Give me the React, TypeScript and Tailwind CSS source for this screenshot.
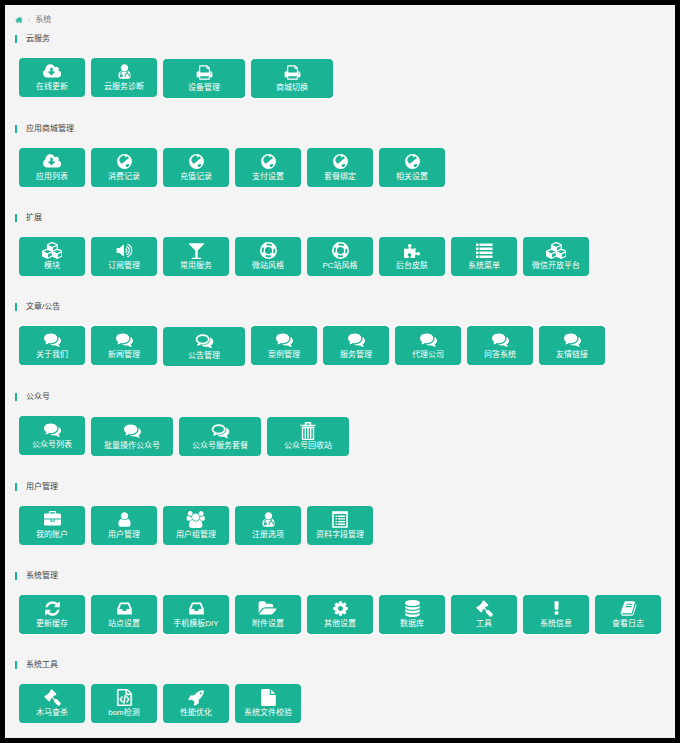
import { ReactNode } from "react";
import { FaPuzzlePiece } from "react-icons/fa";

type IconProps = {
  path: string;
  viewBox?: string;
  className?: string;
};

type CardType = {
  label: string;
  icon: ReactNode;
  wide?: boolean;
};

type SectionType = {
  title: string;
  cards: CardType[];
};

const Icon: React.FC<IconProps> = ({
  path,
  viewBox = "0 0 1792 1792",
  className = "h-[17px]",
}) => (
  <svg className={className} viewBox={viewBox} fill="currentColor" aria-hidden="true">
    <path d={path} />
  </svg>
);

const paths = {
  home: "M1472 992v480q0 26-19 45t-45 19h-384v-384h-256v384h-384q-26 0-45-19t-19-45v-480q0-1 .5-3t.5-3l575-474 575 474q1 2 1 6zm223-69l-62 74q-8 9-21 11h-3q-13 0-21-7l-692-577-692 577q-12 8-24 7-13-2-21-11l-62-74q-8-10-7-23.5t11-21.5l719-599q32-26 76-26t76 26l244 204v-195q0-14 9-23t23-9h192q14 0 23 9t9 23v408l219 182q10 8 11 21.5t-7 23.5z",
  cloud:
    "M1216 928q0-14-9-23t-23-9h-224v-352q0-13-9.5-22.5t-22.5-9.5h-192q-13 0-22.5 9.5t-9.5 22.5v352h-224q-13 0-22.5 9.5t-9.5 22.5q0 14 9 23l352 352q9 9 23 9t23-9l351-351q10-12 10-24zm640 224q0 159-112.5 271.5t-271.5 112.5h-1088q-185 0-316.5-131.5t-131.5-316.5q0-130 70-240t188-165q-2-30-2-43 0-212 150-362t362-150q156 0 285.5 87t188.5 231q71-62 166-62 106 0 181 75t75 181q0 76-41 138 130 31 213.5 135.5t83.5 238.5z",
  user: "M1536 1399q0 109-62.5 187t-150.5 78h-854q-88 0-150.5-78t-62.5-187q0-85 8.5-160.5t31.5-152 58.5-131 94-89 134.5-34.5q131 128 313 128t313-128q76 0 134.5 34.5t94 89 58.5 131 31.5 152 8.5 160.5zm-256-887q0 159-112.5 271.5t-271.5 112.5-271.5-112.5-112.5-271.5 112.5-271.5 271.5-112.5 271.5 112.5 112.5 271.5z",
  print:
    "M448 1536h896v-256h-896v256zm0-640h896v-384h-160q-40 0-68-28t-28-68v-160h-640v640zm1152 64q0-26-19-45t-45-19-45 19-19 45 19 45 45 19 45-19 19-45zm128 0v416q0 13-9.5 22.5t-22.5 9.5h-224v160q0 40-28 68t-68 28h-960q-40 0-68-28t-28-68v-160h-224q-13 0-22.5-9.5t-9.5-22.5v-416q0-79 56.5-135.5t135.5-56.5h64v-544q0-40 28-68t68-28h672q40 0 88 20t76 48l152 152q28 28 48 76t20 88v256h64q79 0 135.5 56.5t56.5 135.5z",
  cubes:
    "M640 1632l384-192v-314l-384 164v342zm-64-454l404-173-404-173-404 173zm1088 454l384-192v-314l-384 164v342zm-64-454l404-173-404-173-404 173zm-448-293l384-165v-266l-384 164v267zm-64-379l441-189-441-189-441 189zm1088 518v416q0 36-19 67t-52 47l-448 224q-25 14-57 14t-57-14l-448-224q-4-2-7-4-2 2-7 4l-448 224q-25 14-57 14t-57-14l-448-224q-33-16-52-47t-19-67v-416q0-38 21.5-70t56.5-48l434-186v-400q0-38 21.5-70t56.5-48l448-192q23-10 50-10t50 10l448 192q35 16 56.5 48t21.5 70v400l434 186q36 16 57 48t21 70z",
  volume:
    "M832 352v1088q0 26-19 45t-45 19-45-19l-333-333h-262q-26 0-45-19t-19-45v-384q0-26 19-45t45-19h262l333-333q19-19 45-19t45 19 19 45zm384 544q0 76-42.5 141.5t-112.5 93.5q-10 5-25 5-26 0-45-18.5t-19-45.5q0-21 12-35.5t29-25 34-23 29-36 12-56.5-12-56.5-29-36-34-23-29-25-12-35.5q0-27 19-45.5t45-18.5q15 0 25 5 70 27 112.5 93t42.5 142zm256 0q0 153-85 282.5t-225 188.5q-13 5-25 5-27 0-46-19t-19-45q0-39 39-59 56-29 76-44 74-54 115.5-135.5t41.5-173.5-41.5-173.5-115.5-135.5q-20-15-76-44-39-20-39-59 0-26 19-45t45-19q13 0 26 5 140 59 225 188.5t85 282.5zm256 0q0 230-127 422.5t-338 283.5q-13 5-26 5-26 0-45-19t-19-45q0-36 39-59 7-4 22.5-10.5t22.5-10.5q46-25 82-51 123-91 192-227t69-289-69-289-192-227q-36-26-82-51-7-4-22.5-10.5t-22.5-10.5q-39-23-39-59 0-26 19-45t45-19q13 0 26 5 211 91 338 283.5t127 422.5z",
  glass:
    "M1699 186q0 35-43 78l-632 632v768h320q26 0 45 19t19 45-19 45-45 19h-896q-26 0-45-19t-19-45 19-45 45-19h320v-768l-632-632q-43-43-43-78 0-23 18-36.5t38-17.5 43-4h1408q23 0 43 4t38 17.5 18 36.5z",
  comments:
    "M1408 768q0 139-94 257t-256.5 186.5-353.5 68.5q-86 0-176-16-124 88-278 128-36 9-86 16h-3q-11 0-20.5-8t-11.5-21q-1-3-1-6.5t.5-6.5 2-6l2.5-5 3.5-5.5 4-5 4.5-5 4-4.5q5-6 23-25t26-29.5 22.5-29 25-38.5 20.5-44q-124-72-195-177t-71-224q0-139 94-257t256.5-186.5 353.5-68.5 353.5 68.5 256.5 186.5 94 257zm384 256q0 120-71 224.5t-195 176.5q10 24 20.5 44t25 38.5 22.5 29 26 29.5 23 25q1 1 4 4.5t4.5 5 4 5 3.5 5.5l2.5 5 2 6 .5 6.5-1 6.5q-3 14-13 22t-22 7q-50-7-86-16-154-40-278-128-90 16-176 16-271 0-472-132 58 4 88 4 161 0 309-45t264-129q125-92 192-212t67-254q0-77-23-152 129 71 204 178t75 230z",
  commentsOutline:
    "M704 384q-153 0-286 52t-211.5 141-78.5 191q0 82 53 158t149 132l97 56-35 84q34-20 62-39l44-31 53 10q78 14 153 14 153 0 286-52t211.5-141 78.5-191-78.5-191-211.5-141-286-52zm0-128q191 0 353.5 68.5t256.5 186.5 94 257-94 257-256.5 186.5-353.5 68.5q-86 0-176-16-124 88-278 128-36 9-86 16h-3q-11 0-20.5-8t-11.5-21q-1-3-1-6.5t.5-6.5 2-6l2.5-5 3.5-5.5 4-5 4.5-5 4-4.5q5-6 23-25t26-29.5 22.5-29 25-38.5 20.5-44q-124-72-195-177t-71-224q0-139 94-257t256.5-186.5 353.5-68.5zm822 1169q10 24 20.5 44t25 38.5 22.5 29 26 29.5 23 25q1 1 4 4.5t4.5 5 4 5 3.5 5.5l2.5 5 2 6 .5 6.5-1 6.5q-3 14-13 22t-22 7q-50-7-86-16-154-40-278-128-90 16-176 16-271 0-472-132 58 4 88 4 161 0 309-45t264-129q125-92 192-212t67-254q0-77-23-152 129 71 204 178t75 230q0 120-71 224.5t-195 176.5z",
  briefcase:
    "M640 256h512v-128h-512v128zm1152 640v480q0 66-47 113t-113 47h-1472q-66 0-113-47t-47-113v-480h672v160q0 26 19 45t45 19h320q26 0 45-19t19-45v-160h672zm-768 0v128h-256v-128h256zm768-480v384h-1792v-384q0-66 47-113t113-47h352v-160q0-40 28-68t68-28h576q40 0 68 28t28 68v160h352q66 0 113 47t47 113z",
  users:
    "M657 896q-162 5-265 128h-134q-82 0-138-40.5t-56-118.5q0-353 124-353 6 0 43.5 21t97.5 42.5 119 21.5q67 0 133-23-5 37-5 66 0 159 81 256zm1071 637q0 120-73 189.5t-194 69.5h-874q-121 0-194-69.5t-73-189.5q0-53 3.5-103.5t14-109 26.5-108.5 43-97.5 62-81 85.5-53.5 111.5-20q10 0 43 21.5t73 48 107 48 135 21.5 135-21.5 107-48 73-48 43-21.5q61 0 111.5 20t85.5 53.5 62 81 43 97.5 26.5 108.5 14 109 3.5 103.5zm-1024-1277q0 106-75 181t-181 75-181-75-75-181 75-181 181-75 181 75 75 181zm704 384q0 159-112.5 271.5t-271.5 112.5-271.5-112.5-112.5-271.5 112.5-271.5 271.5-112.5 271.5 112.5 112.5 271.5zm576 225q0 78-56 118.5t-138 40.5h-134q-103-123-265-128 81-97 81-256 0-29-5-66 66 23 133 23 59 0 119-21.5t97.5-42.5 43.5-21q124 0 124 353zm-128-609q0 106-75 181t-181 75-181-75-75-181 75-181 181-75 181 75 75 181z",
  refresh:
    "M1639 1056q0 5-1 7-64 268-268 434.5t-478 166.5q-146 0-282.5-55t-243.5-157l-129 129q-19 19-45 19t-45-19-19-45v-448q0-26 19-45t45-19h448q26 0 45 19t19 45-19 45l-137 137q71 66 161 102t187 36q134 0 250-65t186-179q11-17 53-117 8-23 30-23h192q13 0 22.5 9.5t9.5 22.5zm25-800v448q0 26-19 45t-45 19h-448q-26 0-45-19t-19-45 19-45l138-138q-148-137-349-137-134 0-250 65t-186 179q-11 17-53 117-8 23-30 23h-199q-13 0-22.5-9.5t-9.5-22.5v-7q65-268 270-434.5t480-166.5q146 0 284 55.5t245 156.5l130-129q19-19 45-19t45 19 19 45z",
  inbox:
    "M1151 960h316q-1-3-2.5-8.5t-2.5-7.5l-212-496h-708l-212 496q-1 3-2.5 8.5t-2.5 7.5h316l95 192h320zm513 30v482q0 26-19 45t-45 19h-1408q-26 0-45-19t-19-45v-482q0-62 25-123l238-552q10-25 36.5-42t52.5-17h832q26 0 52.5 17t36.5 42l238 552q25 61 25 123z",
  folder:
    "M1943 952q0 31-31 66l-336 396q-43 51-120.5 86.5t-143.5 35.5h-1088q-34 0-60.5-13t-26.5-43q0-31 31-66l336-396q43-51 120.5-86.5t143.5-35.5h1088q34 0 60.5 13t26.5 43zm-343-344v160h-832q-94 0-197 47.5t-164 119.5l-337 396-5 6q0-4-.5-12.5t-.5-12.5v-960q0-92 66-158t158-66h320q92 0 158 66t66 158v32h544q92 0 158 66t66 158z",
  cog: "M1152 896q0-106-75-181t-181-75-181 75-75 181 75 181 181 75 181-75 75-181zm512-109v222q0 12-8 23t-20 13l-185 28q-19 54-39 91 35 50 107 138 10 12 10 25t-9 23q-27 37-99 108t-94 71q-12 0-26-9l-138-108q-44 23-91 38-16 136-29 186-7 28-36 28h-222q-14 0-24.5-8.5t-11.5-21.5l-28-184q-49-16-90-37l-141 107q-10 9-25 9-14 0-25-11-126-114-165-168-7-10-7-23 0-12 8-23 15-21 51-66.5t54-70.5q-27-50-41-99l-183-27q-13-2-21-12.5t-8-23.5v-222q0-12 8-23t19-13l186-28q14-46 39-92-40-57-107-138-10-12-10-24 0-10 9-23 26-36 98.5-107.5t94.5-71.5q13 0 26 10l138 107q44-23 91-38 16-136 29-186 7-28 36-28h222q14 0 24.5 8.5t11.5 21.5l28 184q49 16 90 37l142-107q9-9 24-9 13 0 25 10 129 119 165 170 7 8 7 22 0 12-8 23-15 21-51 66.5t-54 70.5q26 50 41 98l183 28q13 2 21 12.5t8 23.5z",
  database:
    "M896 768q237 0 443-43t325-127v170q0 69-103 128t-280 93.5-385 34.5-385-34.5-280-93.5-103-128v-170q119 84 325 127t443 43zm0 768q237 0 443-43t325-127v170q0 69-103 128t-280 93.5-385 34.5-385-34.5-280-93.5-103-128v-170q119 84 325 127t443 43zm0-384q237 0 443-43t325-127v170q0 69-103 128t-280 93.5-385 34.5-385-34.5-280-93.5-103-128v-170q119 84 325 127t443 43zm0-1152q208 0 385 34.5t280 93.5 103 128v128q0 69-103 128t-280 93.5-385 34.5-385-34.5-280-93.5-103-128v-128q0-69 103-128t280-93.5 385-34.5z",
  gavel:
    "M1771 1536q0 53-37 90l-107 108q-39 37-91 37-53 0-90-37l-363-364q-38-36-38-90 0-53 43-96l-256-256-126 126q-14 14-34 14t-34-14q2 2 12.5 12t12.5 13 10 11.5 10 13.5 6 13.5 5.5 16.5 1.5 18q0 38-28 68-3 3-16.5 18t-19 20.5-18.5 16.5-22 15.5-22 9-26 4.5q-40 0-68-28l-408-408q-28-28-28-68 0-13 4.5-26t9-22 15.5-22 16.5-18.5 20.5-19 18-16.5q30-28 68-28 10 0 18 1.5t16.5 5.5 13.5 6 13.5 10 11.5 10 13 12.5 12 12.5q-14-14-14-34t14-34l348-348q14-14 34-14t34 14q-2-2-12.5-12t-12.5-13-10-11.5-10-13.5-6-13.5-5.5-16.5-1.5-18q0-38 28-68 3-3 16.5-18t19-20.5 18.5-16.5 22-15.5 22-9 26-4.5q40 0 68 28l408 408q28 28 28 68 0 13-4.5 26t-9 22-15.5 22-16.5 18.5-20.5 19-18 16.5q-30 28-68 28-10 0-18-1.5t-16.5-5.5-13.5-6-13.5-10-11.5-10-13-12.5-12-12.5q14 14 14 34t-14 34l-126 126 256 256q43-43 96-43 52 0 91 37l363 363q37 39 37 91z",
  exclamation:
    "M1088 1248v224q0 26-19 45t-45 19h-256q-26 0-45-19t-19-45v-224q0-26 19-45t45-19h256q26 0 45 19t19 45zm30-1056l-28 768q-1 26-20.5 45t-45.5 19h-256q-26 0-45.5-19t-20.5-45l-28-768q-1-26 17.5-45t44.5-19h320q26 0 44.5 19t17.5 45z",
  book: "M1703 478q40 57 18 129l-275 906q-19 64-76.5 107.5t-122.5 43.5h-923q-77 0-148.5-53.5t-99.5-131.5q-24-67-2-127 0-4 3-27t4-37q1-8-3-21.5t-3-19.5q2-11 8-21t16.5-23.5 16.5-23.5q23-38 45-91.5t30-91.5q3-10 .5-30t-.5-28q3-11 17-28t17-23q21-36 42-92t25-90q1-9-2.5-32t.5-28q4-13 22-30.5t22-22.5q19-26 42.5-84.5t27.5-96.5q1-8-3-25.5t-2-26.5q2-8 9-18t18-23 17-21q8-12 16.5-30.5t15-35 16-36 19.5-32 26.5-23.5 36-11.5 47.5 5.5l-1 3q38-9 51-9h761q74 0 114 56t18 130l-274 906q-36 119-71.5 153.5t-128.5 34.5h-869q-27 0-38 15-11 16-1 43 24 70 144 70h923q29 0 56-15.5t35-41.5l300-987q7-22 5-57 38 15 59 43zm-1064 2q-4 13 2 22.5t20 9.5h608q13 0 25.5-9.5t16.5-22.5l21-64q4-13-2-22.5t-20-9.5h-608q-13 0-25.5 9.5t-16.5 22.5zm-83 256q-4 13 2 22.5t20 9.5h608q13 0 25.5-9.5t16.5-22.5l21-64q4-13-2-22.5t-20-9.5h-608q-13 0-25.5 9.5t-16.5 22.5z",
  fileCode:
    "M1596 380q28 28 48 76t20 88v1152q0 40-28 68t-68 28h-1344q-40 0-68-28t-28-68v-1600q0-40 28-68t68-28h896q40 0 88 20t76 48zm-444-244v376h376q-10-29-22-41l-313-313q-12-12-41-22zm384 1528v-1024h-416q-40 0-68-28t-28-68v-416h-768v1536h1280zm-928-896q8-11 21-12.5t24 6.5l51 38q11 8 12.5 21t-6.5 24l-182 243 182 243q8 11 6.5 24t-12.5 21l-51 38q-11 8-24 6.5t-21-12.5l-226-301q-14-19 0-38zm802 301q14 19 0 38l-226 301q-8 11-21 12.5t-24-6.5l-51-38q-11-8-12.5-21t6.5-24l182-243-182-243q-8-11-6.5-24t12.5-21l51-38q11-8 24-6.5t21 12.5zm-620 461q-13-2-20.5-13t-5.5-24l138-831q2-13 13-20.5t24-5.5l63 10q13 2 20.5 13t5.5 24l-138 831q-2 13-13 20.5t-24 5.5z",
  rocket:
    "M1440 448q0-40-28-68t-68-28-68 28-28 68 28 68 68 28 68-28 28-68zm224-288q0 249-75.5 430.5t-253.5 360.5q-81 80-195 176l-20 379q-2 16-16 26l-384 224q-7 4-16 4-12 0-23-9l-64-64q-13-14-8-32l85-276-281-281-276 85q-3 1-9 1-14 0-23-9l-64-64q-17-19-5-39l224-384q10-14 26-16l379-20q96-114 176-195 188-187 358-258t431-71q14 0 24 9.5t10 22.5z",
  file: "M1152 512v-472q22 14 36 28l408 408q14 14 28 36h-472zm-128 32q0 40 28 68t68 28h544v1056q0 40-28 68t-68 28h-1344q-40 0-68-28t-28-68v-1600q0-40 28-68t68-28h800v544z",
};

const GlobeIcon = () => (
  <svg className="h-[17px]" viewBox="0 0 16 16" aria-hidden="true">
    <circle cx="8" cy="8" r="7" fill="currentColor" />
    <path
      className="fill-[#1ab394]"
      d="M3.8 4.4 5.6 2.8 7.6 2.2 8.8 2.8 8.2 3.8l1 .5 1-1.2 1.8 1-.6 1.6-1.7.6-1 1.5-1.3.5-.6 1.3-1.4-.5.3 1-1-.3L3.8 8.2 3 6.6z"
    />
    <path className="fill-[#1ab394]" d="m9 11.2 1.9-.9 1.7.6-.6 1.4-1.6 1.1-1-.4z" />
  </svg>
);

const DoctorIcon = () => (
  <svg className="h-[17px]" viewBox="0 0 1792 1792" aria-hidden="true">
    <path fill="currentColor" d={paths.user} />
    <g className="fill-none stroke-[#1ab394]" strokeWidth="120">
      <path d="M540 880v380" />
      <circle cx="560" cy="1370" r="90" />
      <path d="M1180 880v210M960 1460v-140q0-210 220-210t220 210v140" />
    </g>
  </svg>
);

const LifeRingIcon = () => (
  <svg
    className="h-[17px]"
    viewBox="0 0 1792 1792"
    fill="none"
    stroke="currentColor"
    aria-hidden="true"
  >
    <circle cx="896" cy="896" r="811" strokeWidth="170" />
    <circle cx="896" cy="896" r="450" strokeWidth="150" />
    {/* the four solid blocks on the diagonals */}
    <circle
      cx="896"
      cy="896"
      r="640"
      strokeWidth="300"
      strokeDasharray="440 565.3"
      strokeDashoffset="-282"
    />
  </svg>
);

const ListIcon = () => (
  <svg className="h-4" viewBox="0 0 18 16" fill="currentColor" aria-hidden="true">
    {[1, 5, 9, 13].map((y) => (
      <path key={y} d={`M1 ${y - 0.5}h2.5v2.5h-2.5zM4.5 ${y - 0.5}h13v2.5h-13z`} />
    ))}
  </svg>
);

const TrashIcon = () => (
  <svg
    className="h-[18px]"
    viewBox="0 0 16 18"
    fill="none"
    stroke="currentColor"
    aria-hidden="true"
  >
    <path d="M.5 3.5h15M5.5 3V.8h5V3" strokeWidth="1.4" />
    <path d="M2.5 5.5v12h11v-12z" strokeWidth="1.4" />
    <path d="M5.3 5.5v11M8 5.5v11M10.7 5.5v11" strokeWidth="1.4" />
  </svg>
);

const FieldsIcon = () => (
  <svg
    className="h-[17px]"
    viewBox="0 0 16 17"
    fill="none"
    stroke="currentColor"
    aria-hidden="true"
  >
    <path d="M1 1h14v15H1z" strokeWidth="1.6" />
    <path d="M1 2h14" strokeWidth="2" />
    <path d="M3.5 5.2h1.7M3.5 7.9h1.7M3.5 10.6h1.7M3.5 13.3h1.7" strokeWidth="1.4" />
    <path d="M6 5.2h7M6 7.9h7M6 10.6h7M6 13.3h7" strokeWidth="1.4" />
  </svg>
);

const cloud = <Icon path={paths.cloud} viewBox="-64 0 1920 1792" />;
const cubes = <Icon path={paths.cubes} viewBox="0 0 2176 1792" />;
const comments = <Icon path={paths.comments} />;
const commentsOutline = (
  <Icon
    path={paths.commentsOutline}
    className="h-[17px] overflow-visible stroke-current stroke-[60]"
  />
);

const sections: SectionType[] = [
  {
    title: "云服务",
    cards: [
      { label: "在线更新", icon: cloud },
      { label: "云服务诊断", icon: <DoctorIcon /> },
      { label: "设备管理", icon: <Icon path={paths.print} />, wide: true },
      { label: "商城切换", icon: <Icon path={paths.print} />, wide: true },
    ],
  },
  {
    title: "应用商城管理",
    cards: [
      { label: "应用列表", icon: cloud },
      { label: "消费记录", icon: <GlobeIcon /> },
      { label: "充值记录", icon: <GlobeIcon /> },
      { label: "支付设置", icon: <GlobeIcon /> },
      { label: "套餐绑定", icon: <GlobeIcon /> },
      { label: "相关设置", icon: <GlobeIcon /> },
    ],
  },
  {
    title: "扩展",
    cards: [
      { label: "模块", icon: cubes },
      { label: "订阅管理", icon: <Icon path={paths.volume} /> },
      { label: "常用服务", icon: <Icon path={paths.glass} /> },
      { label: "微站风格", icon: <LifeRingIcon /> },
      { label: "PC站风格", icon: <LifeRingIcon /> },
      { label: "后台皮肤", icon: <FaPuzzlePiece className="size-4" /> },
      { label: "系统菜单", icon: <ListIcon /> },
      { label: "微信开放平台", icon: cubes },
    ],
  },
  {
    title: "文章/公告",
    cards: [
      { label: "关于我们", icon: comments },
      { label: "新闻管理", icon: comments },
      { label: "公告管理", icon: commentsOutline, wide: true },
      { label: "案例管理", icon: comments },
      { label: "服务管理", icon: comments },
      { label: "代理公司", icon: comments },
      { label: "问答系统", icon: comments },
      { label: "友情链接", icon: comments },
    ],
  },
  {
    title: "公众号",
    cards: [
      { label: "公众号列表", icon: comments },
      { label: "批量操作公众号", icon: comments, wide: true },
      { label: "公众号服务套餐", icon: commentsOutline, wide: true },
      { label: "公众号回收站", icon: <TrashIcon />, wide: true },
    ],
  },
  {
    title: "用户管理",
    cards: [
      { label: "我的账户", icon: <Icon path={paths.briefcase} /> },
      { label: "用户管理", icon: <Icon path={paths.user} /> },
      {
        label: "用户组管理",
        icon: <Icon path={paths.users} viewBox="0 0 2048 1792" />,
      },
      { label: "注册选项", icon: <DoctorIcon /> },
      { label: "资料字段管理", icon: <FieldsIcon /> },
    ],
  },
  {
    title: "系统管理",
    cards: [
      { label: "更新缓存", icon: <Icon path={paths.refresh} /> },
      { label: "站点设置", icon: <Icon path={paths.inbox} /> },
      { label: "手机模板DIY", icon: <Icon path={paths.inbox} /> },
      {
        label: "附件设置",
        icon: <Icon path={paths.folder} viewBox="0 0 2008 1792" />,
      },
      { label: "其他设置", icon: <Icon path={paths.cog} /> },
      { label: "数据库", icon: <Icon path={paths.database} /> },
      { label: "工具", icon: <Icon path={paths.gavel} /> },
      { label: "系统信息", icon: <Icon path={paths.exclamation} /> },
      { label: "查看日志", icon: <Icon path={paths.book} /> },
    ],
  },
  {
    title: "系统工具",
    cards: [
      { label: "木马查杀", icon: <Icon path={paths.gavel} /> },
      {
        label: "bom检测",
        icon: (
          <Icon
            path={paths.fileCode}
            className="h-[17px] stroke-current stroke-[40]"
          />
        ),
      },
      { label: "性能优化", icon: <Icon path={paths.rocket} /> },
      { label: "系统文件校验", icon: <Icon path={paths.file} /> },
    ],
  },
];

const Card: React.FC<CardType> = ({ label, icon, wide = false }) => (
  <a
    href="#"
    className={`${
      wide ? "w-[82px] mt-px" : "w-[66px]"
    } flex flex-col items-center rounded bg-[#1ab394] pt-[5px] pb-1 text-white hover:bg-[#18a689]`}
  >
    <span className="flex h-[17px] items-center justify-center">{icon}</span>
    <span className="leading-[13px] whitespace-nowrap">{label}</span>
  </a>
);

const Section: React.FC<SectionType> = ({ title, cards }) => (
  <section>
    <h2 className="ml-2.5 flex h-2 items-center border-l-2 border-[#1ab394] pl-[9px] text-[#444]">
      {title}
    </h2>
    <div className="mt-[15px] ml-3.5 flex flex-wrap items-start gap-1.5">
      {cards.map((card) => (
        <Card key={card.label} {...card} />
      ))}
    </div>
  </section>
);

export default function App() {
  return (
    <div className="min-h-screen border-5 border-black bg-[#f4f4f4] pt-[9px] pb-3.5 font-['Liberation_Sans','Noto_Sans_CJK_SC',sans-serif] text-[8px]">
      <nav className="mb-[9px] ml-2.5 flex h-3 items-center text-[#777]">
        <a href="#" aria-label="首页" className="text-[#1ab394]">
          <Icon path={paths.home} className="size-2" />
        </a>
        <span className="mx-[5px] text-[#ccc]">/</span>
        <span>系统</span>
      </nav>
      <main className="flex flex-col gap-[27px]">
        {sections.map((section) => (
          <Section key={section.title} {...section} />
        ))}
      </main>
    </div>
  );
}
